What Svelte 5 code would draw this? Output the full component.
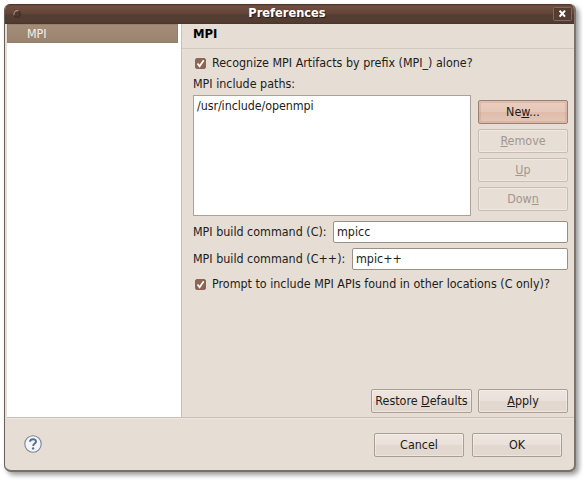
<script>
  const listButtons = [
    { pre: 'Ne', key: 'w', post: '...', state: 'hot' },
    { pre: '', key: 'R', post: 'emove', state: 'disabled' },
    { pre: '', key: 'U', post: 'p', state: 'disabled' },
    { pre: 'Dow', key: 'n', post: '', state: 'disabled' }
  ];
</script>

{#snippet check()}
  <svg class="check" width="11" height="11" viewBox="0 0 11 11">
    <rect x=".5" y=".5" width="10" height="10" rx="1.5" fill="#8e6550" stroke="#84695b" />
    <path d="M2.5 5.4 4.6 8.2 8.7 2.2" fill="none" stroke="#fff" stroke-width="1.7" />
  </svg>
{/snippet}

<div class="stage">
  <div class="window">
    <header class="titlebar">
      <svg class="dot" width="10" height="10" viewBox="0 0 10 10">
        <circle cx="5" cy="5" r="3.4" fill="#50382e" stroke="#3d2a22" />
        <path d="M2 6.2A3.4 3.4 0 0 1 6.6 2" fill="none" stroke="#b39686" stroke-width="1.1" />
      </svg>
      <span class="title">Preferences</span>
      <svg class="close" width="19" height="14" viewBox="0 0 19 14">
        <rect x=".5" y=".5" width="18" height="13" rx="1" fill="#553d33" stroke="#806a5f" />
        <path d="M6.6 3.6 12 9.6M12 3.6 6.6 9.6" stroke="#fff" stroke-width="2.1" />
      </svg>
    </header>
    <div class="body">
      <nav><div class="item"><span>MPI</span></div></nav>
      <main>
        <h1><span>MPI</span></h1>
        <section>
          <label class="row first">{@render check()}<span class="t1">Recognize MPI Artifacts by prefix (MPI_) alone?</span></label>
          <div class="caption">MPI include paths:</div>
          <div class="paths">
            <div class="list">/usr/include/openmpi</div>
            <div class="stack">
              {#each listButtons as b}
                <button class={b.state}><span>{b.pre}<u>{b.key}</u>{b.post}</span></button>
              {/each}
            </div>
          </div>
          <div class="field c"><span>MPI build command (C):</span><div class="input">mpicc</div></div>
          <div class="field cpp"><span>MPI build command (C++):</span><div class="input">mpic++</div></div>
          <label class="row second">{@render check()}<span class="t2">Prompt to include MPI APIs found in other locations (C only)?</span></label>
          <div class="actions">
            <button class="wide"><span>Restore <u>D</u>efaults</span></button>
            <button><span><u>A</u>pply</span></button>
          </div>
        </section>
      </main>
    </div>
    <footer>
      <svg class="help" width="18" height="18" viewBox="0 0 18 18">
        <circle cx="9" cy="9" r="8.2" fill="#f3f5f8" stroke="#75869b" stroke-width="1.1" />
        <path d="M6 6.8C6 3.4 12 3.5 12 6.6C12 8.7 9.2 8.5 9.2 11" fill="none" stroke="#566c88" stroke-width="1.9" />
        <circle cx="9.1" cy="13.4" r="1.2" fill="#566c88" />
      </svg>
      <div class="confirm">
        <button><span>Cancel</span></button>
        <button><span>OK</span></button>
      </div>
    </footer>
  </div>
</div>

<style>
  :global(body) { background: #fff; overflow: hidden; }
  .stage {
    box-sizing: border-box; width: 583px; height: 480px; padding: 4px 0 0 4px; background: #fff;
    font: 12.4px/16px "DejaVu Sans Condensed", "DejaVu Sans", sans-serif; font-stretch: condensed; color: #201c1a;
    white-space: nowrap;
  }
  .window {
    box-sizing: border-box; width: 572px; height: 468px; display: flex; flex-direction: column;
    border: 1px solid #6a6059; border-right: 2px solid #7d736b; border-bottom: 2px solid #7a7068; border-top: 0;
    border-radius: 6px 6px 7px 7px; background: #e6ddd4; overflow: hidden;
    box-shadow: 3px 3px 5px rgba(0, 0, 0, .4);
  }
  .titlebar {
    flex: none; height: 20px; box-sizing: border-box; display: flex; align-items: center; padding: 0 2px 0 7px;
    background: linear-gradient(#4a3026, #704e40 2px, #644639 9px, #533d33 11px, #533d33 18px, #45322a 20px);
  }
  .title {
    flex: 1; text-align: center; color: #fff; font-weight: bold; font-size: 12.7px; text-shadow: 1px 1px 1px #2b1c15;
    padding-right: 1px; margin-top: -2px;
  }
  .body { flex: 1; display: flex; min-height: 0; padding-left: 2px; }
  nav { width: 175px; box-sizing: border-box; background: #fff; border-right: 1px solid #c9bfb6; padding-right: 3px; }
  .item {
    height: 19px; box-sizing: border-box; border: 1px solid #93806e; background: linear-gradient(#a38d79, #9a8470);
    color: #f4eee8; padding-left: 19px; line-height: 17px;
  }
  main { flex: 1; display: flex; flex-direction: column; }
  h1 { margin: 0; height: 24px; box-sizing: content-box; border-bottom: 1px solid #d2c8bf; font-size: 12.9px; line-height: 19px; color: #000; padding-left: 11px; }
  section { flex: 1; display: flex; flex-direction: column; padding: 0 6px 0 11px; }
  .row { display: flex; align-items: center; height: 16px; gap: 6px; padding-left: 2px; }
  .first { margin-top: 6px; }
  .caption { margin-top: 5px; height: 19px; }
  .paths { display: flex; gap: 7px; }
  .list { width: 278px; height: 121px; box-sizing: border-box; border: 1px solid #aaa199; background: #fff; padding: 2px 3px; letter-spacing: -.07px; }
  .stack { display: flex; flex-direction: column; gap: 5px; padding-top: 5px; }
  button {
    box-sizing: border-box; width: 90px; height: 24px; padding: 0; border: 1px solid #a99d94; border-radius: 2px;
    background: linear-gradient(#eee6df, #e9e0d9 50%, #e2d8cf 52%, #e2d8d0); color: inherit; font: inherit; line-height: 20px;
    box-shadow: inset 0 0 0 1px rgba(255, 255, 255, .35);
  }
  button.hot { border-color: #9c8074; background: linear-gradient(#e9cec0, #e5c7b8 50%, #dfbcab 52%, #e4c7b8); box-shadow: inset 0 0 0 2px rgba(190, 135, 115, .25); }
  button.disabled { border-color: #c7bdb4; background: #e7ded6; color: #a1978f; }
  u { text-underline-offset: 1px; }
  .field { display: flex; align-items: center; height: 22px; }
  .c { margin-top: 5px; }
  .cpp { margin-top: 5px; }
  .field > span { width: 140px; flex: none; }
  .cpp > span { width: 159px; }
  .input { flex: 1; height: 22px; box-sizing: border-box; border: 1px solid #9b8f86; border-radius: 2px; background: #fff; padding-left: 3px; line-height: 20px; }
  .second { margin-top: 6px; }
  .actions { margin-top: auto; display: flex; justify-content: flex-end; gap: 6px; padding-bottom: 4px; }
  .wide { width: 101px; }
  footer {
    flex: none; height: 53px; box-sizing: border-box; border-top: 1px solid #c9bfb6; box-shadow: inset 0 1px #eee7e0; margin-left: 2px;
    display: flex; justify-content: space-between; align-items: flex-start; padding: 15px 12px 0 17px;
  }
  .help { margin-top: 2px; }
  .confirm { display: flex; gap: 8px; }
</style>
